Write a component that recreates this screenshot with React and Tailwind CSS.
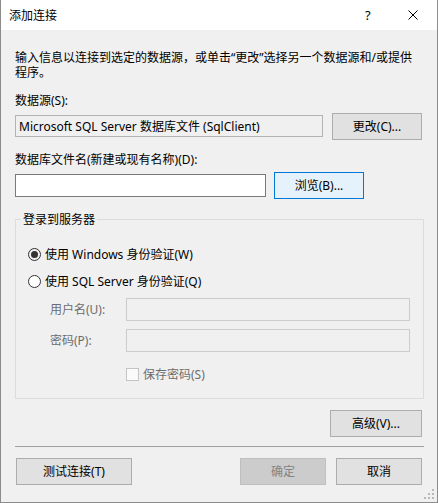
import React from "react";

const font = { fontFamily: '"Noto Sans", "Noto Sans CJK SC", sans-serif' };

function Btn({ children, className = "" }) {
  return (
    <div
      className={
        "h-[27px] flex items-center justify-center border text-[12px] leading-[15px] whitespace-nowrap " +
        className
      }
    >
      {children}
    </div>
  );
}

export default function App() {
  return (
    <div
      className="relative w-[438px] h-[503px] bg-[#f0f0f0] border-x border-b border-[#8c8c8c] flex flex-col text-black text-[12px] leading-[15px]"
      style={font}
    >
      {/* title bar */}
      <div className="h-[30px] bg-white flex items-center pl-[8px] shrink-0">
        <span className="text-[12px]">添加连接</span>
        <span className="ml-auto text-[13px] w-[8px] mr-[35px] leading-[15px]">?</span>
        <svg width="10" height="10" viewBox="0 0 10 10" className="mr-[19px]">
          <path d="M0.5 0.5 L9.5 9.5 M9.5 0.5 L0.5 9.5" stroke="#000" strokeWidth="1" />
        </svg>
      </div>

      <div className="flex flex-col pl-[14px] pr-[15px]">
        <div className="mt-[20px] leading-[15px] whitespace-nowrap">
          输入信息以连接到选定的数据源，或单击“更改”选择另一个数据源和/或提供
          <br />
          程序。
        </div>

        <div className="mt-[13px]">数据源(S):</div>
        <div className="mt-[5px] flex items-start">
          <div className="mt-[2px] w-[308px] h-[22px] border border-[#b4b4b4] bg-[#f0f0f0] flex items-center pl-[3px] whitespace-nowrap">
            Microsoft SQL Server 数据库文件 (SqlClient)
          </div>
          <Btn className="ml-auto w-[90px] bg-[#e1e1e1] border-[#adadad]">更改(C)...</Btn>
        </div>

        <div className="mt-[12px]">数据库文件名(新建或现有名称)(D):</div>
        <div className="mt-[5px] flex items-start">
          <div className="mt-[2px] w-[251px] h-[23px] border border-[#7a7a7a] bg-white" />
          <Btn className="ml-[8px] w-[90px] bg-[#e5f1fb] border-[#0078d7]">浏览(B)...</Btn>
        </div>

        {/* group box */}
        <div className="relative mt-[20px] w-[409px] border border-[#dcdcdc] pl-[12px] pt-[26px] pb-[17px] flex flex-col">
          <div className="absolute -top-[8px] left-[5px] px-[2px] bg-[#f0f0f0] leading-[15px]">
            登录到服务器
          </div>
          <div className="h-[16px] flex items-center">
            <div className="w-[13px] h-[13px] rounded-full border border-[#333] flex items-center justify-center">
              <div className="w-[7px] h-[7px] rounded-full bg-[#333]" />
            </div>
            <span className="ml-[4px]">使用 Windows 身份验证(W)</span>
          </div>
          <div className="mt-[11px] h-[16px] flex items-center">
            <div className="w-[13px] h-[13px] rounded-full border border-[#333] bg-white" />
            <span className="ml-[4px]">使用 SQL Server 身份验证(Q)</span>
          </div>
          <div className="mt-[9px] flex items-center text-[#6d6d6d]">
            <span className="ml-[22px] w-[76px]">用户名(U):</span>
            <div className="w-[284px] h-[23px] border border-[#cccccc] bg-[#f0f0f0]" />
          </div>
          <div className="mt-[8px] flex items-center text-[#6d6d6d]">
            <span className="ml-[22px] w-[76px]">密码(P):</span>
            <div className="w-[284px] h-[23px] border border-[#cccccc] bg-[#f0f0f0]" />
          </div>
          <div className="mt-[15px] h-[14px] flex items-center text-[#6d6d6d]">
            <div className="ml-[98px] w-[13px] h-[13px] border border-[#c4c4c4] bg-[#fafafa]" />
            <span className="ml-[4px]">保存密码(S)</span>
          </div>
        </div>

        <div className="mt-[11px] flex">
          <Btn className="ml-auto w-[92px] bg-[#e1e1e1] border-[#adadad]">高级(V)...</Btn>
        </div>

        <div className="mt-[9px] w-[409px] h-px bg-[#a0a0a0]" />

        <div className="mt-[11px] flex items-center">
          <Btn className="ml-[1px] w-[116px] bg-[#e1e1e1] border-[#adadad]">测试连接(T)</Btn>
          <Btn className="ml-auto w-[86px] bg-[#cccccc] border-[#bfbfbf] text-[#838383]">确定</Btn>
          <Btn className="ml-[10px] w-[86px] bg-[#e1e1e1] border-[#adadad]">取消</Btn>
        </div>
      </div>

      {/* resize grip */}
      <svg width="12" height="12" viewBox="0 0 12 12" className="absolute right-[2px] bottom-[2px]">
        <g fill="#b8b8b8">
          <rect x="9" y="1" width="2" height="2" />
          <rect x="5" y="5" width="2" height="2" />
          <rect x="9" y="5" width="2" height="2" />
          <rect x="1" y="9" width="2" height="2" />
          <rect x="5" y="9" width="2" height="2" />
          <rect x="9" y="9" width="2" height="2" />
        </g>
      </svg>
    </div>
  );
}
